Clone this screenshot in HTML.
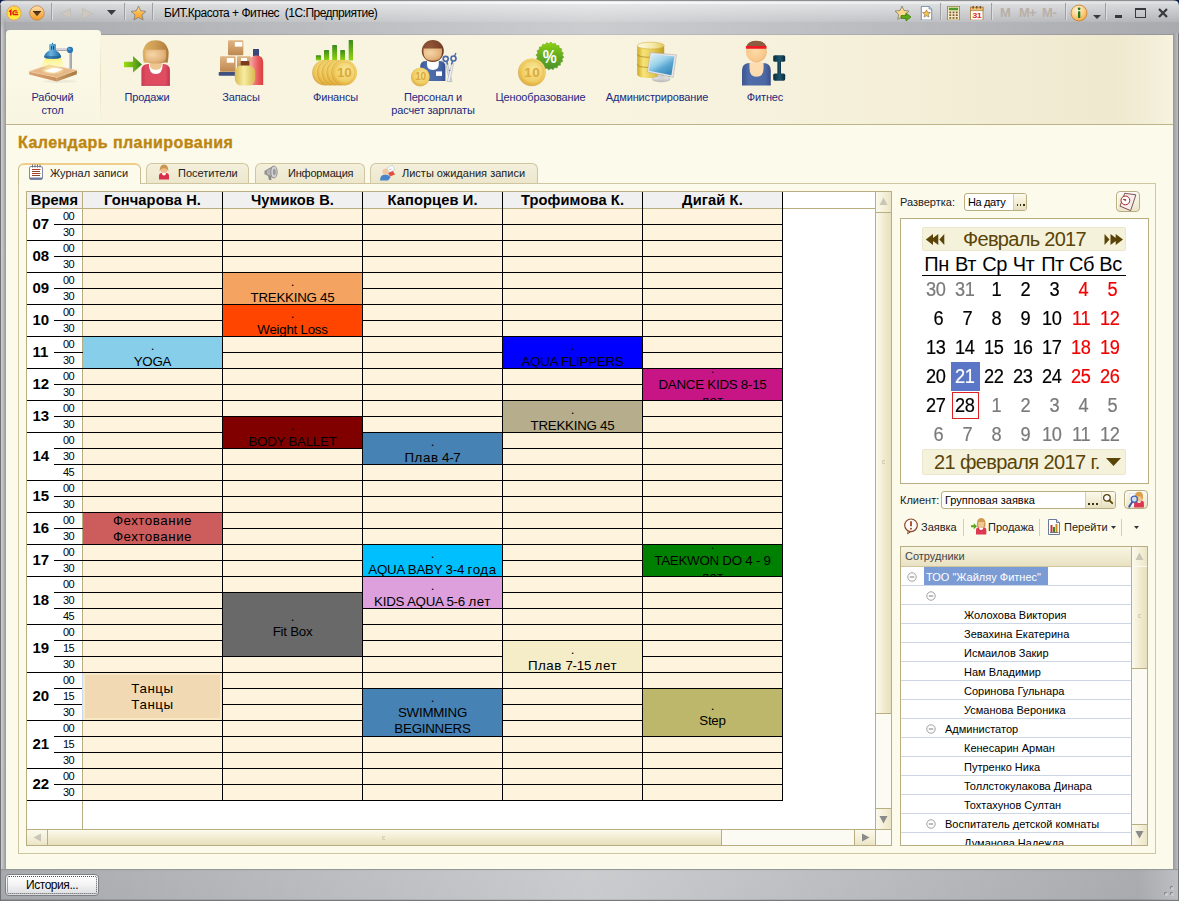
<!DOCTYPE html>
<html><head><meta charset="utf-8"><title>1C</title>
<style>
*{box-sizing:border-box;margin:0;padding:0}
html,body{width:1179px;height:901px;overflow:hidden;background:#a9abaf;font-family:"Liberation Sans",sans-serif;font-size:11px;color:#000}
div,span,svg{position:absolute}
#frame{left:0;top:0;width:1179px;height:901px;background:#a8aaae;overflow:hidden}
#titlebar{left:0;top:0;width:1179px;height:35px;background:linear-gradient(#606266 0,#a8a9ac 0.800px,#dfe0e1 1.600px,#dedfe0 3.300px,#d6d7d9 4.500px,#c8c9cc 12px,#b3b5b8 21.500px,#a9abaf 22.500px,#a8aaae 33.500px,#94969a 34.500px,#94969a 35px)}
.hl2{left:0;width:1179px;background:linear-gradient(90deg,rgba(255,255,255,0) 0,rgba(255,255,255,0.400) 50%,rgba(255,255,255,0) 100%)}
#content{left:6px;top:35px;width:1167px;height:834px;background:#fcfaeb}
#secpanel{left:6px;top:35px;width:1167px;height:90px;background:linear-gradient(90deg,#f8f4e0 0,#f8f4e0 50%,#f5f0da 72%,#efe9cf 95%,#f3eed8 98.5%,#f7f3df 100%);border-bottom:1px solid #beb389}
.sec{top:91px;text-align:center;color:#1c2a80;font-size:11px;line-height:13px;white-space:nowrap;transform:translateX(-50%);letter-spacing:-0.15px}
.t{white-space:nowrap}
.tsep{top:3px;width:2px;height:17px;border-left:1px solid #9d9fa3;border-right:1px solid #dcdddf}
</style></head><body>
<div id="frame">
<div id="titlebar"></div>
<div class="hl2" style="top:1px;height:34px"></div>
<div style="left:0;top:1.500px;width:1179px;height:2.500px;background:linear-gradient(90deg,rgba(255,255,255,0) 0,rgba(255,255,255,0.750) 50%,rgba(255,255,255,0) 100%)"></div>
<div id="content"></div>
<!-- window borders -->
<div style="left:0;top:5px;width:1px;height:896px;background:#6e7073"></div>
<div style="left:1px;top:16px;width:5px;height:885px;background:linear-gradient(90deg,#cfd0d2 0,#c2c3c6 1.500px,#aeb0b3 3px,#96989c 5px);-webkit-mask-image:linear-gradient(transparent 0,#000 14px);mask-image:linear-gradient(transparent 0,#000 14px)"></div>
<div style="left:1173px;top:33px;width:6px;height:868px;background:linear-gradient(90deg,#97999d 0,#a3a5a9 1.500px,#aeb0b3 3px,#bcbec0 5px,#77797d 5px,#77797d 6px)"></div>
<div style="left:0;top:869px;width:1179px;height:32px;background:linear-gradient(#8d8f93 0,#a4a6aa 1.500px,#a8aaae 4px,#a6a8ac 30px,#77797d 31px)"></div>
<div class="hl2" style="top:870px;height:30px"></div>
<div style="left:1138px;top:870px;width:40px;height:30px;background:linear-gradient(90deg,rgba(205,207,210,0),rgba(205,207,210,0.550))"></div>
<div style="left:0;top:869px;width:1px;height:32px;background:#6e7073"></div>
<div style="left:1178px;top:869px;width:1px;height:32px;background:#77797d"></div>
<!-- corners -->
<svg style="left:0;top:0" width="6" height="6" viewBox="0 0 6 6"><path d="M0 0H6Q0 0 0 6Z" fill="#0a1e4a"/></svg>
<svg style="left:1173px;top:0" width="6" height="6" viewBox="0 0 6 6"><path d="M6 0H0Q6 0 6 6Z" fill="#0a1e4a"/></svg>
<!-- resize grip -->
<div style="left:1171px;top:887px;width:3px;height:3px;border-radius:1px;background:#c9cacc;box-shadow:-1px -1px 0 #85878b"></div>
<div style="left:1165px;top:893px;width:3px;height:3px;border-radius:1px;background:#c9cacc;box-shadow:-1px -1px 0 #85878b"></div>
<div style="left:1171px;top:893px;width:3px;height:3px;border-radius:1px;background:#c9cacc;box-shadow:-1px -1px 0 #85878b"></div>
<!-- title bar icons -->
<svg style="left:6px;top:5px" width="16" height="16" viewBox="0 0 16 16"><defs><linearGradient id="g1c" x1="0" y1="0" x2="0" y2="1"><stop offset="0" stop-color="#ffd24a"/><stop offset="0.500" stop-color="#ffe61e"/><stop offset="1" stop-color="#fff04a"/></linearGradient></defs><circle cx="8" cy="8" r="7.200" fill="url(#g1c)" stroke="#e3a070" stroke-width="1"/><path d="M3.200 6.800L4.800 5.400V10.600" stroke="#e8121c" stroke-width="1.500" fill="none"/><path d="M11 6.200Q8.500 4.800 7.200 6.800Q6.400 8.600 7.800 9.600H12.200" stroke="#e8121c" stroke-width="1.400" fill="none"/><path d="M8.800 7.800H12" stroke="#e8121c" stroke-width="1" fill="none"/></svg>
<svg style="left:29px;top:5px" width="16" height="17" viewBox="0 0 16 17"><defs><linearGradient id="gdd" x1="0" y1="0" x2="0" y2="1"><stop offset="0" stop-color="#fde2b8"/><stop offset="0.450" stop-color="#f9bf6a"/><stop offset="1" stop-color="#f49a22"/></linearGradient></defs><circle cx="8" cy="8" r="7.200" fill="url(#gdd)" stroke="#c8894a" stroke-width="0.900"/><path d="M3.800 6.200H12.200L8 11.200Z" fill="#5a3a1a"/><path d="M3.800 6.200H12.200L11.500 7H4.500Z" fill="#2a1a0a"/></svg>
<div class="tsep" style="left:51px"></div>
<svg style="left:60px;top:8px" width="11" height="11" viewBox="0 0 11 11"><path d="M10.500 0.500V10.500L0.500 5.500Z" fill="#cdc8c0" stroke="#bdb8b0" stroke-width="0.600"/></svg>
<svg style="left:82px;top:8px" width="11" height="11" viewBox="0 0 11 11"><path d="M0.500 0.500V10.500L10.500 5.500Z" fill="#cdc8c0" stroke="#bdb8b0" stroke-width="0.600"/></svg>
<svg style="left:107px;top:10px" width="9" height="5" viewBox="0 0 9 5"><path d="M0 0H9L4.500 5Z" fill="#3a3a3c"/></svg>
<div class="tsep" style="left:124px"></div>
<svg style="left:130px;top:5px" width="17" height="16" viewBox="0 0 17 16"><defs><linearGradient id="gst" x1="0" y1="0" x2="0" y2="1"><stop offset="0" stop-color="#ffe09a"/><stop offset="0.500" stop-color="#fbb84a"/><stop offset="1" stop-color="#f59a20"/></linearGradient></defs><path d="M8.500 1L10.700 5.800L15.900 6.400L12 9.900L13.100 15L8.500 12.400L3.900 15L5 9.900L1.100 6.400L6.300 5.800Z" fill="url(#gst)" stroke="#8a8478" stroke-width="0.900" stroke-linejoin="round"/></svg>
<div class="tsep" style="left:152px"></div>
<div class="t" style="left:164px;top:6px;font-size:12px;line-height:14px;color:#000;letter-spacing:-0.5px">БИТ.Красота + Фитнес&nbsp; (1С:Предприятие)</div>

<svg style="left:894px;top:5px" width="18" height="17" viewBox="0 0 18 17"><path d="M8 1L10 5.500L15 6.100L11.300 9.400L12.300 14.300L8 11.800L3.700 14.300L4.700 9.400L1 6.100L6 5.500Z" fill="#fbd98a" stroke="#8a8478" stroke-width="0.900" stroke-linejoin="round"/><path d="M7 10.500H12V8L17 12L12 16V13.500H7Z" fill="#5aa81a" stroke="#3a7a0a" stroke-width="0.700"/></svg>
<svg style="left:919.500px;top:5.500px" width="13" height="14.500" viewBox="0 0 15 17" preserveAspectRatio="none"><path d="M1.500 0.500H10.500L13.500 3.500V16.500H1.500Z" fill="#fff" stroke="#6a7f9f"/><path d="M10.500 0.500V3.500H13.500" fill="#dfe7f2" stroke="#6a7f9f"/><path d="M7.500 4.500L8.800 7.400L12 7.700L9.600 9.800L10.300 13L7.500 11.400L4.700 13L5.400 9.800L3 7.700L6.200 7.400Z" fill="#fbc04a" stroke="#8a7a58" stroke-width="0.800" stroke-linejoin="round"/></svg>
<div class="tsep" style="left:940px"></div>
<svg style="left:947px;top:5.500px" width="13" height="14.500" viewBox="0 0 14 17" preserveAspectRatio="none"><rect x="0.500" y="0.500" width="13" height="16" fill="#f6ecc8" stroke="#a08a50"/><rect x="2" y="2" width="10" height="3" fill="#4f9a2a"/><g fill="#7a5a30"><rect x="2.500" y="6.500" width="2" height="2"/><rect x="6" y="6.500" width="2" height="2"/><rect x="9.500" y="6.500" width="2" height="2"/><rect x="2.500" y="9.700" width="2" height="2"/><rect x="6" y="9.700" width="2" height="2"/><rect x="9.500" y="9.700" width="2" height="2"/><rect x="2.500" y="13" width="2" height="2"/><rect x="6" y="13" width="2" height="2"/><rect x="9.500" y="13" width="2" height="2"/></g></svg>
<svg style="left:970px;top:5.500px" width="13.500" height="14.500" viewBox="0 0 14 17" preserveAspectRatio="none"><rect x="0.500" y="1.500" width="13" height="15" fill="#fff" stroke="#b08a50"/><rect x="0.500" y="1.500" width="13" height="4" fill="#f0c070" stroke="#b08a50"/><g fill="#7a5020"><rect x="2.500" y="0" width="1.500" height="3"/><rect x="6.200" y="0" width="1.500" height="3"/><rect x="10" y="0" width="1.500" height="3"/></g><text x="7" y="14.500" font-family="Liberation Sans" font-size="9.500" font-weight="bold" fill="#e03020" text-anchor="middle" letter-spacing="-0.500">31</text></svg>
<div class="tsep" style="left:991px"></div>
<div class="t" style="left:1000px;top:5px;font-size:13px;line-height:15px;font-weight:bold;color:#b9afa6;letter-spacing:-0.300px">M</div>
<div class="t" style="left:1019px;top:5px;font-size:13px;line-height:15px;font-weight:bold;color:#b9afa6;letter-spacing:-0.800px">M+</div>
<div class="t" style="left:1042px;top:5px;font-size:13px;line-height:15px;font-weight:bold;color:#b9afa6;letter-spacing:-0.300px">M-</div>
<div class="tsep" style="left:1065px"></div>
<svg style="left:1070px;top:4px" width="18" height="18" viewBox="0 0 18 18"><defs><radialGradient id="ginf" cx="0.400" cy="0.300" r="0.800"><stop offset="0" stop-color="#fff6e0"/><stop offset="0.500" stop-color="#fbd08a"/><stop offset="1" stop-color="#f0a030"/></radialGradient></defs><circle cx="9" cy="9" r="8" fill="url(#ginf)" stroke="#c8893a" stroke-width="0.900"/><rect x="8" y="7.300" width="2.300" height="6.700" fill="#2a7a1a"/><circle cx="9.100" cy="4.800" r="1.400" fill="#2a7a1a"/></svg>
<svg style="left:1093px;top:14.500px" width="8" height="4" viewBox="0 0 8 4"><path d="M0 0H8L4 4Z" fill="#3a3a3c"/></svg>
<div class="tsep" style="left:1105px"></div>
<div style="left:1115px;top:15px;width:7px;height:2.500px;background:#38393b"></div>
<div style="left:1135px;top:8px;width:11px;height:10px;border:1px solid #38393b;border-top:2px solid #38393b"></div>
<svg style="left:1158px;top:8px" width="10" height="10" viewBox="0 0 10 10"><path d="M1 1L9 9M9 1L1 9" stroke="#38393b" stroke-width="2.200"/></svg>
<div id="secpanel"></div>
<div style="left:6px;top:30px;width:95px;height:94px;border-radius:4px 4px 0 0;background:linear-gradient(#fbf9e8,#faf7e5 60%,#f8f5e1)"></div>
<div style="left:100px;top:36px;width:1px;height:88px;background:linear-gradient(rgba(210,200,160,0),rgba(210,200,160,0.500) 50%,rgba(210,200,160,0))"></div>
<div class="sec" style="left:52.5px">Рабочий<br>стол</div>
<div class="sec" style="left:147px">Продажи</div>
<div class="sec" style="left:241px">Запасы</div>
<div class="sec" style="left:335.5px">Финансы</div>
<div class="sec" style="left:433px">Персонал и<br>расчет зарплаты</div>
<div class="sec" style="left:540.5px">Ценообразование</div>
<div class="sec" style="left:657px">Администрирование</div>
<div class="sec" style="left:765px">Фитнес</div>
<div class="t" style="left:18px;top:132.500px;font-size:16px;line-height:20px;font-weight:bold;color:#bc8610;letter-spacing:0.44px;-webkit-text-stroke:0.35px #bc8610">Календарь планирования</div>
<svg style="left:0;top:35px" width="1179" height="90" viewBox="0 35 1179 90">
<defs>
<linearGradient id="wood" x1="0" y1="0" x2="1" y2="0"><stop offset="0" stop-color="#e9bf90"/><stop offset="1" stop-color="#d69c66"/></linearGradient>
<linearGradient id="shade" x1="0" y1="0" x2="1" y2="0"><stop offset="0" stop-color="#1f6fae"/><stop offset="0.400" stop-color="#6ab4e0"/><stop offset="1" stop-color="#1a5f9a"/></linearGradient>
<linearGradient id="cone" x1="0" y1="0" x2="0" y2="1"><stop offset="0" stop-color="#fff36a" stop-opacity="0.950"/><stop offset="1" stop-color="#fff9b0" stop-opacity="0.350"/></linearGradient>
<linearGradient id="pole" x1="0" y1="0" x2="1" y2="0"><stop offset="0" stop-color="#d8d8de"/><stop offset="1" stop-color="#8a8a94"/></linearGradient>
<linearGradient id="garr" x1="0" y1="0" x2="0" y2="1"><stop offset="0" stop-color="#9ad02a"/><stop offset="1" stop-color="#3f8f0e"/></linearGradient>
<linearGradient id="hairw" x1="0" y1="0" x2="0" y2="1"><stop offset="0" stop-color="#d4a662"/><stop offset="1" stop-color="#b07c3a"/></linearGradient>
<radialGradient id="skin" cx="0.500" cy="0.400" r="0.700"><stop offset="0" stop-color="#f6d2a8"/><stop offset="1" stop-color="#dca06a"/></radialGradient>
<linearGradient id="redb" x1="0" y1="0" x2="0" y2="1"><stop offset="0" stop-color="#e2506a"/><stop offset="1" stop-color="#c42a48"/></linearGradient>
<linearGradient id="box" x1="0" y1="0" x2="0" y2="1"><stop offset="0" stop-color="#e0b484"/><stop offset="1" stop-color="#bd8850"/></linearGradient>
<linearGradient id="jar" x1="0" y1="0" x2="1" y2="0"><stop offset="0" stop-color="#dcbc54"/><stop offset="0.450" stop-color="#f6eca2"/><stop offset="1" stop-color="#dab850"/></linearGradient>
<linearGradient id="bottle" x1="0" y1="0" x2="1" y2="0"><stop offset="0" stop-color="#f7a8a8"/><stop offset="0.600" stop-color="#ea5a5a"/><stop offset="1" stop-color="#d84040"/></linearGradient>
<linearGradient id="gbar" x1="0" y1="0" x2="0" y2="1"><stop offset="0" stop-color="#4a9a10"/><stop offset="1" stop-color="#a4dc3c"/></linearGradient>
<radialGradient id="coin" cx="0.400" cy="0.350" r="0.750"><stop offset="0" stop-color="#fbe596"/><stop offset="0.600" stop-color="#ecc050"/><stop offset="1" stop-color="#c99422"/></radialGradient>
<linearGradient id="blueb" x1="0" y1="0" x2="0" y2="1"><stop offset="0" stop-color="#4a6cb0"/><stop offset="1" stop-color="#2f4a8a"/></linearGradient>
<radialGradient id="badge" cx="0.400" cy="0.350" r="0.750"><stop offset="0" stop-color="#72b83a"/><stop offset="1" stop-color="#3a7c14"/></radialGradient>
<linearGradient id="db" x1="0" y1="0" x2="1" y2="0"><stop offset="0" stop-color="#caa22a"/><stop offset="0.350" stop-color="#f6e27a"/><stop offset="1" stop-color="#c09820"/></linearGradient>
<linearGradient id="scr" x1="0" y1="0" x2="1" y2="1"><stop offset="0" stop-color="#c4e6f8"/><stop offset="0.500" stop-color="#7cc0e6"/><stop offset="1" stop-color="#3c8cc4"/></linearGradient>
<linearGradient id="tank" x1="0" y1="0" x2="1" y2="0"><stop offset="0" stop-color="#5474b4"/><stop offset="1" stop-color="#34508e"/></linearGradient>
</defs>
<g>
<defs><radialGradient id="glow" cx="0.500" cy="0.500" r="0.500"><stop offset="0" stop-color="#fff6c8" stop-opacity="0.950"/><stop offset="0.600" stop-color="#fcebb0" stop-opacity="0.700"/><stop offset="1" stop-color="#f4d8a0" stop-opacity="0"/></radialGradient>
<linearGradient id="woodl" x1="0" y1="0" x2="1" y2="0"><stop offset="0" stop-color="#dba274"/><stop offset="1" stop-color="#c98d5a"/></linearGradient>
<linearGradient id="woodr" x1="0" y1="0" x2="1" y2="0"><stop offset="0" stop-color="#c99a62"/><stop offset="1" stop-color="#a87a44"/></linearGradient></defs>
<ellipse cx="60" cy="81.300" rx="17" ry="1.600" fill="#000" opacity="0.050"/>
<path d="M29.200 71.400L56.800 77.400V81.600L29.200 74.600Z" fill="url(#woodl)"/>
<path d="M56.800 77.400L76.900 70.200V74.200L56.800 81.600Z" fill="url(#woodr)"/>
<path d="M29.200 71.400L49 64.800L76.900 70.200L56.800 77.400Z" fill="#e6b888"/>
<path d="M29.200 71.400L49 64.800L76.900 70.200L56.800 77.400Z" fill="none" stroke="#f0cfa4" stroke-width="0.500"/>
<ellipse cx="52.500" cy="70.300" rx="12.500" ry="4.300" fill="url(#glow)"/>
<path d="M40.900 66.200L45.700 57.900H61L64 66.200Q52.500 70 40.900 66.200Z" fill="url(#cone)"/>
<path d="M44.200 71.100L53.200 67.800L63.400 69L53.800 72.900Z" fill="#fff"/>
<rect x="69" y="52" width="2.800" height="16.900" fill="url(#pole)"/>
<rect x="55.500" y="48" width="12" height="2.700" fill="#d4d4da"/><rect x="55.500" y="50" width="12" height="0.800" fill="#9a9aa2"/>
<circle cx="70" cy="49.900" r="3.100" fill="#2a78b4"/><circle cx="69.200" cy="49" r="1.300" fill="#5aa6d8" opacity="0.800"/>
<path d="M49.300 44.600Q49.300 43.800 52.500 43.800Q55.900 43.800 55.900 44.600V50.400Q60.500 53 61.200 56.600Q61.200 58.900 52.600 58.900Q44 58.900 44 56.600Q44.800 53 49.300 50.400Z" fill="url(#shade)"/>
<ellipse cx="52.600" cy="57.400" rx="8.400" ry="1.500" fill="#134f80" opacity="0.550"/>
<rect x="51.200" y="46" width="0.900" height="3.600" fill="#0f4674"/><rect x="53" y="46" width="0.900" height="3.600" fill="#0f4674"/>
<rect x="52" y="42.800" width="0.900" height="1.400" fill="#1d5f96"/>
</g>
<g>
<defs><linearGradient id="hairh" x1="0" y1="0" x2="1" y2="0"><stop offset="0" stop-color="#dcb262"/><stop offset="0.500" stop-color="#cc9c52"/><stop offset="1" stop-color="#ae7a3a"/></linearGradient>
<linearGradient id="redh" x1="0" y1="0" x2="1" y2="0"><stop offset="0" stop-color="#c83a52"/><stop offset="0.150" stop-color="#de4a60"/><stop offset="0.850" stop-color="#e04c62"/><stop offset="1" stop-color="#c03248"/></linearGradient>
<linearGradient id="garrh" x1="0" y1="0" x2="1" y2="0"><stop offset="0" stop-color="#9cdc10"/><stop offset="0.500" stop-color="#6cb418"/><stop offset="1" stop-color="#3c8618"/></linearGradient>
<radialGradient id="skin2" cx="0.350" cy="0.350" r="0.800"><stop offset="0" stop-color="#f6d6a6"/><stop offset="0.600" stop-color="#e6b882"/><stop offset="1" stop-color="#cf9c62"/></radialGradient></defs>
<path d="M141.400 85.800V70.500Q141.400 63.900 148 63.900H163.300Q169.900 63.900 169.900 70.500V85.800Z" fill="url(#redh)"/>
<path d="M141.400 84.800H169.900V85.800H141.400Z" fill="#a82840" opacity="0.500"/>
<path d="M148.900 63.900H162.700Q162.700 73.900 155.800 73.900Q148.900 73.900 148.900 63.900Z" fill="#fff"/>
<path d="M149.800 62H161.800V64.500Q161.800 69.800 155.800 69.800Q149.800 69.800 149.800 64.500Z" fill="#eec690"/>
<path d="M143.700 62.700Q142 52 143.400 49Q146 40.200 155.700 40.200Q165.400 40.200 168 49Q169.400 52 167.700 62.700Q164 62.200 161 63.300H150.400Q147.500 62.200 143.700 62.700Z" fill="url(#hairh)"/>
<path d="M145.400 49.800H166V57Q166 63.300 155.700 63.300Q145.400 63.300 145.400 57Z" fill="url(#skin2)"/>
<path d="M124 61.800H133V56.100L142 64.400L133 72.600V67.200H124Z" fill="url(#garrh)"/>
</g>
<g>
<rect x="228" y="40.200" width="15.300" height="15" rx="1" fill="url(#box)"/><rect x="234.800" y="42" width="7.500" height="4.600" fill="#fff"/>
<rect x="220" y="56.300" width="15.600" height="15.500" rx="1" fill="url(#box)"/><rect x="226.800" y="58" width="7.200" height="4.700" fill="#fff"/>
<rect x="237" y="56.300" width="14" height="15.500" rx="1" fill="url(#box)"/><rect x="241" y="58" width="6" height="4.700" fill="#fff"/>
<rect x="218.700" y="72" width="20" height="3.800" rx="0.800" fill="#3f4f80"/>
<rect x="253" y="49" width="6" height="7" fill="#39487a"/>
<path d="M250 85V62Q250 55.400 256.500 55.400Q263.200 55.400 263.200 62V85Z" fill="url(#bottle)"/>
<rect x="240.700" y="61" width="8.600" height="5" rx="0.800" fill="#7a3c1c"/>
<rect x="234.800" y="65.600" width="20.400" height="20" rx="6.500" fill="url(#jar)"/>
</g>
<g><defs><linearGradient id="gbar2" x1="0" y1="0" x2="0" y2="1"><stop offset="0" stop-color="#3a8a1c"/><stop offset="1" stop-color="#90d40e"/></linearGradient><radialGradient id="coin2" cx="0.550" cy="0.400" r="0.650"><stop offset="0" stop-color="#f8e89a"/><stop offset="0.700" stop-color="#f0cc62"/><stop offset="0.880" stop-color="#e6b444"/><stop offset="1" stop-color="#cf9a30"/></radialGradient></defs><rect x="315.9" y="55.2" width="5.1" height="5.3" rx="0.600" fill="url(#gbar2)"/><rect x="324.0" y="50.1" width="5.1" height="10.4" rx="0.600" fill="url(#gbar2)"/><rect x="332.2" y="45.0" width="4.8" height="15.5" rx="0.600" fill="url(#gbar2)"/><rect x="340.2" y="50.1" width="4.8" height="10.4" rx="0.600" fill="url(#gbar2)"/><rect x="348.7" y="39.9" width="4.3" height="20.6" rx="0.600" fill="url(#gbar2)"/><circle cx="324.8" cy="72.800" r="12.700" fill="#c08a28" opacity="0.550"/><circle cx="325.3" cy="72.600" r="12.600" fill="url(#coin2)"/><circle cx="329.6" cy="72.800" r="12.700" fill="#c08a28" opacity="0.550"/><circle cx="330.1" cy="72.600" r="12.600" fill="url(#coin2)"/><circle cx="334.4" cy="72.800" r="12.700" fill="#c08a28" opacity="0.550"/><circle cx="334.9" cy="72.600" r="12.600" fill="url(#coin2)"/><circle cx="339.1" cy="72.800" r="12.700" fill="#c08a28" opacity="0.550"/><circle cx="339.6" cy="72.600" r="12.600" fill="url(#coin2)"/><circle cx="343.9" cy="72.800" r="12.700" fill="#c08a28" opacity="0.550"/><circle cx="344.4" cy="72.600" r="12.600" fill="url(#coin2)"/><circle cx="344.400" cy="72.600" r="10.600" fill="none" stroke="#e2b040" stroke-width="0.700" opacity="0.600"/>
<text x="344.300" y="77.400" font-family="Liberation Sans" font-weight="bold" font-size="13.600" fill="#dcaa3a" text-anchor="middle" letter-spacing="-0.300">10</text>
</g>
<g>
<defs><linearGradient id="blueh" x1="0" y1="0" x2="1" y2="0"><stop offset="0" stop-color="#3c5898"/><stop offset="0.300" stop-color="#4e6eae"/><stop offset="0.800" stop-color="#4866a6"/><stop offset="1" stop-color="#34508c"/></linearGradient>
<radialGradient id="hairm" cx="0.350" cy="0.300" r="0.800"><stop offset="0" stop-color="#93583a"/><stop offset="1" stop-color="#6c331a"/></radialGradient></defs>
<path d="M420.200 81V66.500Q420.200 60.900 426 60.900H439.600Q445.400 60.900 445.400 66.500V81Z" fill="url(#blueh)"/>
<path d="M427 60.900H438.800V64Q438.800 69.900 432.900 69.900Q427 69.900 427 64Z" fill="#fff"/>
<rect x="436" y="71.400" width="6" height="4.500" fill="#fff"/>
<circle cx="432.800" cy="51" r="11" fill="url(#hairm)"/>
<path d="M423.500 48.600H442V52.500Q442 60.700 432.800 60.700Q423.500 60.700 423.500 52.500Z" fill="url(#skin2)"/>
<path d="M447.300 62.500L452 81.600L449.400 81.600L445.800 63.500Z" fill="#e0e1e6" stroke="#9ca0aa" stroke-width="0.500"/>
<path d="M452 62.500L447.200 81.600L449.800 81.600L453.600 63.500Z" fill="#f2f2f5" stroke="#9ca0aa" stroke-width="0.500"/><circle cx="449.600" cy="70.400" r="0.700" fill="#5a6a9a"/>
<circle cx="445.700" cy="58.800" r="2.500" fill="none" stroke="#4a6aac" stroke-width="1.700"/>
<circle cx="453.500" cy="58.500" r="2.500" fill="none" stroke="#4a6aac" stroke-width="1.700"/>
<path d="M454.500 56.200L455.700 53.400" stroke="#4a6aac" stroke-width="1.300" stroke-linecap="round"/>
<path d="M446.500 61.300L447.800 64.500M452.700 61L451.400 64.500" stroke="#4a6aac" stroke-width="1.500"/>
<circle cx="420.200" cy="77.100" r="9.300" fill="#c08a28" opacity="0.500"/>
<circle cx="420.500" cy="76.800" r="9.200" fill="url(#coin2)"/>
<text x="420.500" y="80.300" font-family="Liberation Sans" font-weight="bold" font-size="10" fill="#dcaa3a" text-anchor="middle" letter-spacing="-0.300">10</text>
</g>
<g><defs><linearGradient id="badge2" x1="0" y1="0" x2="0" y2="1"><stop offset="0" stop-color="#8ed20e"/><stop offset="0.450" stop-color="#68ae1e"/><stop offset="1" stop-color="#48922a"/></linearGradient></defs><polygon points="563.9,57.2 562.0,59.0 562.8,61.5 560.5,62.6 560.5,65.2 557.9,65.5 557.2,68.0 554.6,67.6 553.1,69.7 550.9,68.5 548.8,70.1 547.0,68.2 544.5,69.0 543.4,66.7 540.8,66.7 540.5,64.1 538.0,63.4 538.4,60.8 536.3,59.3 537.5,57.1 535.9,55.0 537.8,53.2 537.0,50.7 539.3,49.6 539.3,47.0 541.9,46.7 542.6,44.2 545.2,44.6 546.7,42.5 548.9,43.7 551.0,42.1 552.8,44.0 555.3,43.2 556.4,45.5 559.0,45.5 559.3,48.1 561.8,48.8 561.4,51.4 563.5,52.9 562.3,55.1" fill="url(#badge2)" stroke="#5a9a22" stroke-width="0.400" stroke-linejoin="round"/><text x="549.800" y="62.700" font-family="Liberation Sans" font-weight="bold" font-size="17.500" fill="#fff" text-anchor="middle" textLength="14" lengthAdjust="spacingAndGlyphs">%</text>
<circle cx="531.700" cy="72.500" r="13.800" fill="#c08a28" opacity="0.500"/>
<circle cx="532.100" cy="72.100" r="13.700" fill="url(#coin2)"/>
<circle cx="532.100" cy="72.100" r="11.400" fill="none" stroke="#e2b040" stroke-width="0.700" opacity="0.600"/>
<text x="532.200" y="77.100" font-family="Liberation Sans" font-weight="bold" font-size="13.600" fill="#dcaa3a" text-anchor="middle" letter-spacing="0.300">10</text>
</g>
<g>
<defs><linearGradient id="db2" x1="0" y1="0" x2="1" y2="0"><stop offset="0" stop-color="#cfa82a"/><stop offset="0.220" stop-color="#f6e478"/><stop offset="0.550" stop-color="#e6cc58"/><stop offset="1" stop-color="#c09c24"/></linearGradient>
<linearGradient id="dbt" x1="0" y1="0" x2="1" y2="0"><stop offset="0" stop-color="#fffbe8"/><stop offset="0.600" stop-color="#f4e8a4"/><stop offset="1" stop-color="#e0c860"/></linearGradient>
<linearGradient id="scr2" x1="0" y1="0" x2="0.700" y2="1"><stop offset="0" stop-color="#e0f4fa"/><stop offset="0.450" stop-color="#9cd2ea"/><stop offset="0.700" stop-color="#58a6d2"/><stop offset="1" stop-color="#3a8aba"/></linearGradient>
<linearGradient id="stand" x1="0" y1="0" x2="0" y2="1"><stop offset="0" stop-color="#f4f4f4"/><stop offset="1" stop-color="#b4b4b4"/></linearGradient></defs>
<path d="M637.200 45.600V74.500Q637.200 78 650.700 78Q664.200 78 664.200 74.500V45.600Z" fill="url(#db2)"/>
<path d="M637.200 54Q637.200 57.300 650.700 57.300Q664.200 57.300 664.200 54" fill="none" stroke="#a8841c" stroke-width="0.900" opacity="0.800"/>
<path d="M637.200 64.200Q637.200 67.500 650.700 67.500Q664.200 67.500 664.200 64.200" fill="none" stroke="#a8841c" stroke-width="0.900" opacity="0.800"/>
<ellipse cx="650.700" cy="45.600" rx="13.500" ry="3.400" fill="url(#dbt)" stroke="#d4b440" stroke-width="0.600"/>
<ellipse cx="661.200" cy="79.200" rx="9" ry="2.700" fill="url(#stand)" stroke="#a8a8a8" stroke-width="0.400"/>
<path d="M657.500 74.500L665 76L664.500 79H658.500Z" fill="#d4d4d4"/>
<path d="M650.400 52.500L676.500 54.900L673.200 77.400L647.400 72Z" fill="#e6e6e8" stroke="#a4a4a8" stroke-width="0.500" stroke-linejoin="round"/>
<path d="M651.600 54L674.400 56.400L671.400 75.300L648.900 70.800Z" fill="url(#scr2)"/>
<circle cx="669.300" cy="76.500" r="0.600" fill="#3cc030"/>
</g>
<g>
<defs><linearGradient id="tank2" x1="0" y1="0" x2="1" y2="0"><stop offset="0" stop-color="#3e5690"/><stop offset="0.250" stop-color="#506caa"/><stop offset="0.800" stop-color="#4c68a4"/><stop offset="1" stop-color="#3a508a"/></linearGradient>
<radialGradient id="skin3" cx="0.450" cy="0.450" r="0.650"><stop offset="0" stop-color="#fedaa8"/><stop offset="0.700" stop-color="#f8c88c"/><stop offset="1" stop-color="#e8aa6c"/></radialGradient>
<linearGradient id="dumb" x1="0" y1="0" x2="1" y2="0"><stop offset="0" stop-color="#0a2c3e"/><stop offset="0.550" stop-color="#1e566e"/><stop offset="1" stop-color="#0a2c3e"/></linearGradient></defs>
<path d="M742 85.500V70.500Q742 63 749.500 63H763.300Q770.800 63 770.800 70.500V85.500Z" fill="url(#tank2)"/>
<path d="M749.500 62.500H763.600V68Q763.600 76.800 756.500 76.800Q749.500 76.800 749.500 68Z" fill="#fcdcb0"/>
<ellipse cx="756.400" cy="51.800" rx="10.500" ry="10.700" fill="url(#skin3)"/>
<path d="M746.300 46.500Q748 40.800 756.400 40.800Q764.800 40.800 766.500 46.500Z" fill="#8c5c3e"/>
<rect x="745.900" y="45.900" width="20.600" height="2.800" rx="0.600" fill="#f01a22"/>
<rect x="777.400" y="61" width="3.600" height="13.500" fill="url(#dumb)"/>
<rect x="773.200" y="55.200" width="12" height="6.600" rx="1.600" fill="url(#dumb)"/>
<rect x="773.200" y="73.600" width="12" height="7.100" rx="1.600" fill="url(#dumb)"/>
</g>
</svg>
<style>
#tabpage{left:18px;top:183px;width:1138px;height:671px;border:1px solid #cfc59f;background:#fcfaeb}
.tab{top:163px;height:20px;border:1px solid #cfc59f;border-bottom:none;border-radius:6px 6px 0 0;background:linear-gradient(#f4f0dc,#ece6cc);font-size:11px;line-height:17px;white-space:nowrap;color:#222}
.tab.act{top:163px;height:21px;background:#fcfaeb;border-color:#c9bd93;border-top:2px solid #efcd8a;z-index:3}
.tab span{top:1px}
#grid{left:26px;top:191px;width:866px;height:655px;background:#fff;border:1px solid #b9ae82;overflow:hidden}
.hl{height:1px;background:#000}
.ev i{font-style:normal;letter-spacing:0.55px}
.vl{width:1px;background:#000}
.ev{text-align:center;font-size:13.33px;line-height:16px;color:#000;letter-spacing:-0.25px;overflow:hidden;white-space:nowrap}
.hh{font-weight:bold;font-size:14.67px;line-height:16px;white-space:nowrap;color:#000;letter-spacing:0.12px}
.hr{font-weight:bold;font-size:15px;line-height:16px;left:32.5px;color:#000}
.mn{font-size:11px;line-height:12px;left:63px;color:#000;letter-spacing:-0.5px}
</style>
<div id="tabpage"></div>
<div class="tab act" style="left:18px;width:123px"><span class="t" style="left:31px;top:0px;line-height:17px">Журнал записи</span></div>
<div class="tab" style="left:146px;width:103px"><span class="t" style="left:31px">Посетители</span></div>
<div class="tab" style="left:255px;width:110px"><span class="t" style="left:32px;letter-spacing:-0.2px">Информация</span></div>
<div class="tab" style="left:370px;width:168px"><span class="t" style="left:31px">Листы ожидания записи</span></div>
<svg style="left:29px;top:164.300px;z-index:5" width="14" height="16" viewBox="0 0 14 16"><rect x="0.500" y="2.500" width="13" height="13" rx="1.500" fill="#fff" stroke="#7f8aa8"/><path d="M0.800 13.500H13.200V14.500Q13.200 15.200 12.500 15.200H1.500Q0.800 15.200 0.800 14.500Z" fill="#6f7a9c"/><g stroke="#6a6a7a" stroke-width="1"><path d="M3.500 0.500V3.500M6 0.500V3.500M8.500 0.500V3.500M11 0.500V3.500"/></g><g stroke-width="1"><path d="M3 5.500H11" stroke="#b03a2a"/><path d="M3 7.500H11" stroke="#8a4a2a"/><path d="M3 9.500H11" stroke="#b03a2a"/><path d="M3 11.500H11" stroke="#8a4a2a"/></g><rect x="10" y="5" width="1.500" height="1" fill="#e03030"/><rect x="10" y="9" width="1.500" height="1" fill="#30a030"/></svg>
<svg style="left:158px;top:164px;z-index:5" width="12" height="16" viewBox="0 0 12 16"><path d="M1 15.500V12Q1 9 4 9H8Q11 9 11 12V15.500Z" fill="#d8304c"/><path d="M4 9H8Q8 11.500 6 11.500Q4 11.500 4 9Z" fill="#fff"/><circle cx="6" cy="5.300" r="3.600" fill="#eebf8e"/><path d="M1.800 8Q1.200 0.500 6 0.500Q10.800 0.500 10.200 8Q10 4.200 6 4.200Q2 4.200 1.800 8Z" fill="#c8964e"/></svg>
<svg style="left:264px;top:165px;z-index:5" width="17" height="16" viewBox="0 0 17 16"><path d="M2 5.500L9 1.500V12.500L2 9.500Z" fill="#b4b4b4" stroke="#7a7a7a" stroke-width="0.800"/><ellipse cx="10" cy="7" rx="3.200" ry="6" fill="#d6d6d6" stroke="#808080" stroke-width="0.800"/><ellipse cx="10.300" cy="7" rx="1.500" ry="3.300" fill="#9a9a9a"/><path d="M4 10.500L5 15H7.500L7 11.500" fill="#8a8a8a"/><rect x="0.500" y="5.500" width="2" height="4" fill="#8e8e8e"/></svg>
<svg style="left:379px;top:164px;z-index:5" width="17" height="17" viewBox="0 0 17 17"><path d="M1 16.500Q1 10.500 6 10.500Q10 10.500 11.500 13.500L9 16.500Z" fill="#4a84c8"/><circle cx="6.500" cy="7.500" r="3" fill="#f0c8a0"/><path d="M8 4L13.500 1L15.500 6L10 8.500Z" fill="#fff" stroke="#b8c0d0" stroke-width="0.600"/><path d="M9 9L14 7L16 10.500L11 12.500Z" fill="#e05040"/><path d="M10 6L12.500 5" stroke="#9aa8c0" stroke-width="0.700"/></svg>
<div id="grid"></div>
<div style="left:27px;top:192px;width:756px;height:16px;background:#f0f0f0"></div>
<div style="left:83px;top:209px;width:700px;height:592px;background:#fef3dc"></div>
<div style="left:27px;top:208px;width:848px;height:1px;background:#b9ae82"></div>
<div style="left:82px;top:192px;width:1px;height:637px;background:#b9ae82"></div>
<div class="t mn" style="top:210px">00</div>
<div class="hl" style="left:54px;top:224px;width:729px"></div>
<div class="t mn" style="top:226px">30</div>
<div class="hl" style="left:27px;top:240px;width:756px"></div>
<div class="t hr" style="top:216px">07</div>
<div class="t mn" style="top:242px">00</div>
<div class="hl" style="left:54px;top:256px;width:729px"></div>
<div class="t mn" style="top:258px">30</div>
<div class="hl" style="left:27px;top:272px;width:756px"></div>
<div class="t hr" style="top:248px">08</div>
<div class="t mn" style="top:274px">00</div>
<div class="hl" style="left:54px;top:288px;width:729px"></div>
<div class="t mn" style="top:290px">30</div>
<div class="hl" style="left:27px;top:304px;width:756px"></div>
<div class="t hr" style="top:280px">09</div>
<div class="t mn" style="top:306px">00</div>
<div class="hl" style="left:54px;top:320px;width:729px"></div>
<div class="t mn" style="top:322px">30</div>
<div class="hl" style="left:27px;top:336px;width:756px"></div>
<div class="t hr" style="top:312px">10</div>
<div class="t mn" style="top:338px">00</div>
<div class="hl" style="left:54px;top:352px;width:729px"></div>
<div class="t mn" style="top:354px">30</div>
<div class="hl" style="left:27px;top:368px;width:756px"></div>
<div class="t hr" style="top:344px">11</div>
<div class="t mn" style="top:370px">00</div>
<div class="hl" style="left:54px;top:384px;width:729px"></div>
<div class="t mn" style="top:386px">30</div>
<div class="hl" style="left:27px;top:400px;width:756px"></div>
<div class="t hr" style="top:376px">12</div>
<div class="t mn" style="top:402px">00</div>
<div class="hl" style="left:54px;top:416px;width:729px"></div>
<div class="t mn" style="top:418px">30</div>
<div class="hl" style="left:27px;top:432px;width:756px"></div>
<div class="t hr" style="top:408px">13</div>
<div class="t mn" style="top:434px">00</div>
<div class="hl" style="left:54px;top:448px;width:729px"></div>
<div class="t mn" style="top:450px">30</div>
<div class="hl" style="left:54px;top:464px;width:729px"></div>
<div class="t mn" style="top:466px">45</div>
<div class="hl" style="left:27px;top:480px;width:756px"></div>
<div class="t hr" style="top:448px">14</div>
<div class="t mn" style="top:482px">00</div>
<div class="hl" style="left:54px;top:496px;width:729px"></div>
<div class="t mn" style="top:498px">30</div>
<div class="hl" style="left:27px;top:512px;width:756px"></div>
<div class="t hr" style="top:488px">15</div>
<div class="t mn" style="top:514px">00</div>
<div class="hl" style="left:54px;top:528px;width:729px"></div>
<div class="t mn" style="top:530px">30</div>
<div class="hl" style="left:27px;top:544px;width:756px"></div>
<div class="t hr" style="top:520px">16</div>
<div class="t mn" style="top:546px">00</div>
<div class="hl" style="left:54px;top:560px;width:729px"></div>
<div class="t mn" style="top:562px">30</div>
<div class="hl" style="left:27px;top:576px;width:756px"></div>
<div class="t hr" style="top:552px">17</div>
<div class="t mn" style="top:578px">00</div>
<div class="hl" style="left:54px;top:592px;width:729px"></div>
<div class="t mn" style="top:594px">30</div>
<div class="hl" style="left:54px;top:608px;width:729px"></div>
<div class="t mn" style="top:610px">45</div>
<div class="hl" style="left:27px;top:624px;width:756px"></div>
<div class="t hr" style="top:592px">18</div>
<div class="t mn" style="top:626px">00</div>
<div class="hl" style="left:54px;top:640px;width:729px"></div>
<div class="t mn" style="top:642px">15</div>
<div class="hl" style="left:54px;top:656px;width:729px"></div>
<div class="t mn" style="top:658px">30</div>
<div class="hl" style="left:27px;top:672px;width:756px"></div>
<div class="t hr" style="top:640px">19</div>
<div class="t mn" style="top:674px">00</div>
<div class="hl" style="left:54px;top:688px;width:729px"></div>
<div class="t mn" style="top:690px">15</div>
<div class="hl" style="left:54px;top:704px;width:729px"></div>
<div class="t mn" style="top:706px">30</div>
<div class="hl" style="left:27px;top:720px;width:756px"></div>
<div class="t hr" style="top:688px">20</div>
<div class="t mn" style="top:722px">00</div>
<div class="hl" style="left:54px;top:736px;width:729px"></div>
<div class="t mn" style="top:738px">15</div>
<div class="hl" style="left:54px;top:752px;width:729px"></div>
<div class="t mn" style="top:754px">30</div>
<div class="hl" style="left:27px;top:768px;width:756px"></div>
<div class="t hr" style="top:736px">21</div>
<div class="t mn" style="top:770px">00</div>
<div class="hl" style="left:54px;top:784px;width:729px"></div>
<div class="t mn" style="top:786px">30</div>
<div class="hl" style="left:27px;top:800px;width:756px"></div>
<div class="t hr" style="top:776px">22</div>
<div class="vl" style="left:222px;top:192px;height:609px"></div>
<div class="vl" style="left:362px;top:192px;height:609px"></div>
<div class="vl" style="left:502px;top:192px;height:609px"></div>
<div class="vl" style="left:642px;top:192px;height:609px"></div>
<div class="vl" style="left:782px;top:192px;height:609px"></div>
<div class="t hh" style="left:27px;top:192px;width:55px;text-align:center">Время</div>
<div class="t hh" style="left:83px;top:192px;width:139px;text-align:center">Гончарова Н.</div>
<div class="t hh" style="left:223px;top:192px;width:139px;text-align:center">Чумиков В.</div>
<div class="t hh" style="left:363px;top:192px;width:139px;text-align:center">Капорцев И.</div>
<div class="t hh" style="left:503px;top:192px;width:139px;text-align:center">Трофимова К.</div>
<div class="t hh" style="left:643px;top:192px;width:139px;text-align:center">Дигай К.</div>
<div class="ev" style="left:223px;top:273px;width:139px;height:31px;background:#f4a460;"><div class="t" style="left:0;width:139px;top:0.6px;text-align:center">.</div><div class="t" style="left:0;width:139px;top:16.6px;text-align:center">TREKKING 45</div></div>
<div class="ev" style="left:223px;top:305px;width:139px;height:31px;background:#ff4500;"><div class="t" style="left:0;width:139px;top:0.6px;text-align:center">.</div><div class="t" style="left:0;width:139px;top:16.6px;text-align:center">Weight Loss</div></div>
<div class="ev" style="left:223px;top:417px;width:139px;height:31px;background:#800000;"><div class="t" style="left:0;width:139px;top:0.6px;text-align:center">.</div><div class="t" style="left:0;width:139px;top:16.6px;text-align:center">BODY BALLET</div></div>
<div class="ev" style="left:223px;top:593px;width:139px;height:63px;background:#696969;"><div class="t" style="left:0;width:139px;top:15.6px;text-align:center">.</div><div class="t" style="left:0;width:139px;top:31.1px;text-align:center">Fit Box</div></div>
<div class="ev" style="left:83px;top:337px;width:139px;height:31px;background:#87ceeb;"><div class="t" style="left:0;width:139px;top:0.6px;text-align:center">.</div><div class="t" style="left:0;width:139px;top:16.6px;text-align:center">YOGA</div></div>
<div class="ev" style="left:83px;top:513px;width:139px;height:31px;background:#cd5c5c;"><div class="t" style="left:0;width:139px;top:0.1px;text-align:center"><i>Фехтование</i></div><div class="t" style="left:0;width:139px;top:16.3px;text-align:center"><i>Фехтование</i></div></div>
<div class="ev" style="left:83px;top:673px;width:139px;height:47px;background:#f0d9b3;box-shadow:inset 0 0 0 2px #f8e8c6;"><div class="t" style="left:0;width:139px;top:7.6px;text-align:center"><i>Танцы</i></div><div class="t" style="left:0;width:139px;top:23.9px;text-align:center"><i>Танцы</i></div></div>
<div class="ev" style="left:363px;top:433px;width:139px;height:31px;background:#4682b4;"><div class="t" style="left:0;width:139px;top:0.6px;text-align:center">.</div><div class="t" style="left:0;width:139px;top:16.6px;text-align:center"><i>Плав</i> 4-7</div></div>
<div class="ev" style="left:363px;top:545px;width:139px;height:31px;background:#00bfff;"><div class="t" style="left:0;width:139px;top:0.6px;text-align:center">.</div><div class="t" style="left:0;width:139px;top:16.6px;text-align:center">AQUA BABY 3-4 <i>года</i></div></div>
<div class="ev" style="left:363px;top:577px;width:139px;height:31px;background:#dda0dd;"><div class="t" style="left:0;width:139px;top:0.6px;text-align:center">.</div><div class="t" style="left:0;width:139px;top:16.6px;text-align:center">KIDS AQUA 5-6 <i>лет</i></div></div>
<div class="ev" style="left:363px;top:689px;width:139px;height:47px;background:#4682b4;"><div class="t" style="left:0;width:139px;top:0.6px;text-align:center">.</div><div class="t" style="left:0;width:139px;top:15.6px;text-align:center">SWIMMING</div><div class="t" style="left:0;width:139px;top:31.6px;text-align:center">BEGINNERS</div></div>
<div class="ev" style="left:503px;top:337px;width:139px;height:31px;background:#0000ff;"><div class="t" style="left:0;width:139px;top:0.6px;text-align:center">.</div><div class="t" style="left:0;width:139px;top:16.6px;text-align:center">AQUA FLIPPERS</div></div>
<div class="ev" style="left:503px;top:401px;width:139px;height:31px;background:#b5ad8b;"><div class="t" style="left:0;width:139px;top:0.6px;text-align:center">.</div><div class="t" style="left:0;width:139px;top:16.6px;text-align:center">TREKKING 45</div></div>
<div class="ev" style="left:503px;top:641px;width:139px;height:31px;background:#f5ecc8;"><div class="t" style="left:0;width:139px;top:0.6px;text-align:center">.</div><div class="t" style="left:0;width:139px;top:16.6px;text-align:center"><i>Плав</i> 7-15 <i>лет</i></div></div>
<div class="ev" style="left:643px;top:369px;width:139px;height:31px;background:#c71585;"><div class="t" style="left:0;width:139px;top:-8.4px;text-align:center">.</div><div class="t" style="left:0;width:139px;top:7.6px;text-align:center">DANCE KIDS 8-15</div><div class="t" style="left:0;width:139px;top:23.6px;text-align:center"><i>лет</i></div></div>
<div class="ev" style="left:643px;top:545px;width:139px;height:31px;background:#008000;"><div class="t" style="left:0;width:139px;top:-8.4px;text-align:center">.</div><div class="t" style="left:0;width:139px;top:7.6px;text-align:center">TAEKWON DO 4 - 9</div><div class="t" style="left:0;width:139px;top:23.6px;text-align:center"><i>лет</i></div></div>
<div class="ev" style="left:643px;top:689px;width:139px;height:47px;background:#bdb76b;"><div class="t" style="left:0;width:139px;top:8.6px;text-align:center">.</div><div class="t" style="left:0;width:139px;top:23.6px;text-align:center">Step</div></div>
<div style="left:875px;top:192px;width:17px;height:638px;border-left:1px solid #b9ae82;border-right:1px solid #b9ae82;background:#fbfaf3"></div>
<div style="left:876px;top:192px;width:15px;height:20px;background:linear-gradient(90deg,#fbf9ec,#f3eed6 60%,#ebe4c6)"></div>
<div style="left:875px;top:212px;width:17px;height:1px;background:#b9ae82"></div>
<div style="left:876px;top:213px;width:15px;height:500px;background:linear-gradient(90deg,#fcfaee,#f2ecd2 50%,#e6dfbc)"></div>
<div style="left:875px;top:713px;width:17px;height:1px;background:#b9ae82"></div>
<div style="left:875px;top:808px;width:17px;height:1px;background:#b9ae82"></div>
<div style="left:876px;top:809px;width:15px;height:20px;background:linear-gradient(90deg,#fbf9ec,#f3eed6 60%,#ebe4c6)"></div>
<svg style="left:879px;top:197px" width="9" height="9" viewBox="0 0 9 9"><path d="M4.5 0.5 L8.5 8 L0.5 8 Z" fill="#c9c6b8"/></svg>
<svg style="left:879px;top:815px" width="9" height="9" viewBox="0 0 9 9"><path d="M0.5 1 L8.5 1 L4.5 8.5 Z" fill="#8a8a8a"/></svg>
<div style="left:27px;top:829px;width:864px;height:16px;border-top:1px solid #b9ae82;background:#fbfaf3"></div>
<div style="left:27px;top:830px;width:20px;height:15px;background:linear-gradient(#fbf9ec,#f3eed6 60%,#ebe4c6)"></div>
<div style="left:47px;top:830px;width:1px;height:15px;background:#b9ae82"></div>
<div style="left:48px;top:830px;width:673px;height:15px;background:linear-gradient(#fcfaee,#f2ecd2 50%,#e6dfbc)"></div>
<div style="left:721px;top:830px;width:1px;height:15px;background:#b9ae82"></div>
<div style="left:854px;top:830px;width:1px;height:15px;background:#b9ae82"></div>
<div style="left:855px;top:830px;width:20px;height:15px;background:linear-gradient(#fbf9ec,#f3eed6 60%,#ebe4c6)"></div>
<div style="left:875px;top:829px;width:1px;height:16px;background:#b9ae82"></div>
<svg style="left:33px;top:833px" width="9" height="9" viewBox="0 0 9 9"><path d="M8 0.5 L8 8.5 L0.5 4.5 Z" fill="#c9c6b8"/></svg>
<svg style="left:861px;top:833px" width="9" height="9" viewBox="0 0 9 9"><path d="M1 0.5 L1 8.5 L8.5 4.5 Z" fill="#8a8a8a"/></svg>
<div style="left:882px;top:460px;width:3px;height:4px;border:1px solid #d2cba8;border-right:none;border-radius:2px 0 0 2px"></div>
<div style="left:382px;top:836px;width:3px;height:4px;border:1px solid #d2cba8;border-right:none;border-radius:2px 0 0 2px"></div>
<div style="left:82px;top:673px;width:1px;height:47px;background:#c9d8ee"></div>
<style>
.lbl{font-size:11px;line-height:13px;color:#222;white-space:nowrap}
.inp{border:1px solid #b9ae82;border-radius:3px;background:#fff;overflow:hidden}
.btn{border:1px solid #b9ae82;border-radius:4px;background:linear-gradient(#fdfcf4,#f4f0dc 50%,#ebe5c9);box-shadow:inset 1px 1px 0 rgba(255,255,255,0.800)}
.cal{font-size:20px;line-height:29px;text-align:center;width:29px;height:29px;color:#000;white-space:nowrap;letter-spacing:-0.3px;padding-right:1px;-webkit-text-stroke:0.2px}
.cal b{font-weight:normal;display:inline-block;transform:scaleX(0.91);transform-origin:50% 50%}
.cal.g{color:#7a7a7a}
.cal.r{color:#f00000}
.dow{font-size:20px;line-height:24px;text-align:center;width:29px;height:24px;color:#000;white-space:nowrap;letter-spacing:-0.5px}
.tr{font-size:11px;line-height:13px;color:#000;white-space:nowrap}
.trl{left:901px;width:230px;height:1px;background:#cdd6e4}
</style>
<div class="lbl" style="left:900px;top:195.700px">Развертка:</div>
<div class="inp" style="left:964px;top:193px;width:63px;height:18px"><div class="lbl" style="left:3px;top:2px;color:#000;letter-spacing:-0.400px">На дату</div><div style="left:48px;top:0;width:14px;height:16px;border-left:1px solid #d8cfa8;background:linear-gradient(#fbf9ec,#f1ecd4 55%,#e6dfbf)"><div style="left:2.500px;top:10px;width:1.600px;height:2px;background:#3a2e0c"></div><div style="left:5.800px;top:10px;width:1.600px;height:2px;background:#3a2e0c"></div><div style="left:9.100px;top:10px;width:1.600px;height:2px;background:#3a2e0c"></div></div></div>
<div class="btn" style="left:1116px;top:191px;width:24px;height:21px"></div>
<svg style="left:1116px;top:191px" width="24" height="21" viewBox="1116 191 24 21"><path d="M1124.700 193.300L1135.900 194.800L1130.600 210.600L1120 206.100Z" fill="#f9efef" stroke="#5e2c2c" stroke-width="0.800" stroke-linejoin="round"/><circle cx="1125.400" cy="200.400" r="4.400" fill="#fff" stroke="#a82424" stroke-width="1"/><path d="M1125.800 200.800L1122.900 199.300L1125.900 199.500Z" fill="#8a1c1c" stroke="#8a1c1c" stroke-width="0.500"/></svg>
<div style="left:900px;top:218px;width:249px;height:266px;border:1px solid #b9ae82;background:#fff"></div>
<div style="left:922px;top:227px;width:204px;height:24px;background:#f5f2dc;border:1px solid #ebe7cc;border-radius:2px"></div>
<div class="t" style="left:922px;top:227px;width:204px;text-align:center;font-size:20px;line-height:24px;color:#5a4408;letter-spacing:-0.7px;padding-left:1px">Февраль 2017</div>
<svg style="left:925px;top:234px" width="20" height="11" viewBox="0 0 20 11"><path d="M8 0V11L0.800 5.500Z M13.300 0V11L6 5.500Z M19.300 0V11L14.300 5.500Z" fill="#5a4408"/></svg>
<svg style="left:1104px;top:234px" width="20" height="11" viewBox="0 0 20 11"><path d="M0.500 0V11L5.500 5.500Z M6.500 0V11L13.800 5.500Z M11.700 0V11L19 5.500Z" fill="#5a4408"/></svg>
<div class="dow" style="left:922px;top:252px">Пн</div>
<div class="dow" style="left:951px;top:252px">Вт</div>
<div class="dow" style="left:980px;top:252px">Ср</div>
<div class="dow" style="left:1009px;top:252px">Чт</div>
<div class="dow" style="left:1038px;top:252px">Пт</div>
<div class="dow" style="left:1067px;top:252px">Сб</div>
<div class="dow" style="left:1096px;top:252px">Вс</div>
<div style="left:922px;top:275px;width:204px;height:1px;background:#000"></div>
<div class="cal g" style="left:922px;top:275px;"><b>30</b></div>
<div class="cal g" style="left:951px;top:275px;"><b>31</b></div>
<div class="cal " style="left:980px;top:275px;padding-left:5px;"><b>1</b></div>
<div class="cal " style="left:1009px;top:275px;padding-left:5px;"><b>2</b></div>
<div class="cal " style="left:1038px;top:275px;padding-left:5px;"><b>3</b></div>
<div class="cal r" style="left:1067px;top:275px;padding-left:5px;"><b>4</b></div>
<div class="cal r" style="left:1096px;top:275px;padding-left:5px;"><b>5</b></div>
<div class="cal " style="left:922px;top:304px;padding-left:5px;"><b>6</b></div>
<div class="cal " style="left:951px;top:304px;padding-left:5px;"><b>7</b></div>
<div class="cal " style="left:980px;top:304px;padding-left:5px;"><b>8</b></div>
<div class="cal " style="left:1009px;top:304px;padding-left:5px;"><b>9</b></div>
<div class="cal " style="left:1038px;top:304px;"><b>10</b></div>
<div class="cal r" style="left:1067px;top:304px;"><b>11</b></div>
<div class="cal r" style="left:1096px;top:304px;"><b>12</b></div>
<div class="cal " style="left:922px;top:333px;"><b>13</b></div>
<div class="cal " style="left:951px;top:333px;"><b>14</b></div>
<div class="cal " style="left:980px;top:333px;"><b>15</b></div>
<div class="cal " style="left:1009px;top:333px;"><b>16</b></div>
<div class="cal " style="left:1038px;top:333px;"><b>17</b></div>
<div class="cal r" style="left:1067px;top:333px;"><b>18</b></div>
<div class="cal r" style="left:1096px;top:333px;"><b>19</b></div>
<div class="cal " style="left:922px;top:362px;"><b>20</b></div>
<div class="cal " style="left:951px;top:362px;background:#5b76c6;color:#fff;"><b>21</b></div>
<div class="cal " style="left:980px;top:362px;"><b>22</b></div>
<div class="cal " style="left:1009px;top:362px;"><b>23</b></div>
<div class="cal " style="left:1038px;top:362px;"><b>24</b></div>
<div class="cal r" style="left:1067px;top:362px;"><b>25</b></div>
<div class="cal r" style="left:1096px;top:362px;"><b>26</b></div>
<div class="cal " style="left:922px;top:391px;"><b>27</b></div>
<div style="left:952px;top:392px;width:27px;height:27px;border:1px solid #e02020"></div>
<div class="cal " style="left:951px;top:391px;"><b>28</b></div>
<div class="cal g" style="left:980px;top:391px;padding-left:5px;"><b>1</b></div>
<div class="cal g" style="left:1009px;top:391px;padding-left:5px;"><b>2</b></div>
<div class="cal g" style="left:1038px;top:391px;padding-left:5px;"><b>3</b></div>
<div class="cal g" style="left:1067px;top:391px;padding-left:5px;"><b>4</b></div>
<div class="cal g" style="left:1096px;top:391px;padding-left:5px;"><b>5</b></div>
<div class="cal g" style="left:922px;top:420px;padding-left:5px;"><b>6</b></div>
<div class="cal g" style="left:951px;top:420px;padding-left:5px;"><b>7</b></div>
<div class="cal g" style="left:980px;top:420px;padding-left:5px;"><b>8</b></div>
<div class="cal g" style="left:1009px;top:420px;padding-left:5px;"><b>9</b></div>
<div class="cal g" style="left:1038px;top:420px;"><b>10</b></div>
<div class="cal g" style="left:1067px;top:420px;"><b>11</b></div>
<div class="cal g" style="left:1096px;top:420px;"><b>12</b></div>
<div style="left:922px;top:449px;width:204px;height:26px;background:#f5f2dc;border:1px solid #ebe7cc;border-radius:2px"></div>
<div class="t" style="left:934px;top:450px;font-size:20px;line-height:24px;color:#5a4408;letter-spacing:-0.62px">21 февраля 2017 г.</div>
<svg style="left:1106px;top:458px" width="15" height="8" viewBox="0 0 15 8"><path d="M0 0H15L7.500 8Z" fill="#5a4408"/></svg>
<div class="lbl" style="left:900px;top:494px">Клиент:</div>
<div class="inp" style="left:941px;top:491px;width:175px;height:18px"><div class="lbl" style="left:3px;top:2px;color:#000">Групповая заявка</div><div style="left:143px;top:0;width:31px;height:16px;border-left:1px solid #d8cfa8;background:linear-gradient(#fbf9ec,#f1ecd4 55%,#e6dfbf)"><div style="left:2px;top:11px;width:2px;height:2px;background:#3a2e0c"></div><div style="left:6px;top:11px;width:2px;height:2px;background:#3a2e0c"></div><div style="left:10px;top:11px;width:2px;height:2px;background:#3a2e0c"></div><div style="left:15px;top:0;width:1px;height:16px;background:#e4dcb8"></div><svg style="left:16px;top:1px" width="12" height="12" viewBox="0 0 12 12"><circle cx="4.900" cy="4.900" r="3.300" fill="#fff" stroke="#5a4410" stroke-width="1.300"/><path d="M7.400 7.400L10.200 10.200" stroke="#5a4410" stroke-width="1.800" stroke-linecap="round"/></svg></div></div>
<div class="btn" style="left:1124px;top:490px;width:24px;height:19px"></div>
<svg style="left:1124px;top:490px" width="24" height="19" viewBox="1124 490 24 19"><rect x="1129.300" y="493.700" width="5.800" height="12.700" fill="#fff" stroke="#d4d4d8" stroke-width="0.500"/><path d="M1134.100 507.500V503Q1134.100 500.400 1136.700 500.400H1141.300Q1143.900 500.400 1143.900 503V507.500Z" fill="#dc3852"/><path d="M1137 500.400H1141Q1141 502.900 1139 502.900Q1137 502.900 1137 500.400Z" fill="#fff"/><ellipse cx="1139.300" cy="498.800" rx="2.800" ry="3" fill="#f0c48c"/><path d="M1135 497.500Q1134.600 491.800 1139 491.800Q1143.600 491.800 1143 497.500Q1142.900 499.500 1142 500Q1142 496.500 1139 496.200Q1136 496.200 1135 497.500Z" fill="#dca048"/><circle cx="1134.300" cy="499.300" r="3.100" fill="#cfe0f2" stroke="#4a64a8" stroke-width="1.300"/><path d="M1132.200 502L1129.200 506.600" stroke="#3e58a0" stroke-width="2" stroke-linecap="round"/></svg>
<svg style="left:903px;top:518px" width="16" height="18" viewBox="0 0 16 18"><path d="M5.300 12.600L4.600 15.800L8.200 13.400" fill="#fbf6ee" stroke="#8a4a2a" stroke-width="1"/><circle cx="8" cy="7.300" r="6.300" fill="#fbf6ee" stroke="#8a4a2a" stroke-width="1.200"/><circle cx="8" cy="7.300" r="5" fill="#fff" opacity="0.700"/><path d="M8 3.300V8.300" stroke="#a8502a" stroke-width="1.900"/><circle cx="8" cy="10.700" r="1.050" fill="#a8502a"/></svg>
<div class="lbl" style="left:921px;top:521px">Заявка</div>
<div style="left:963px;top:519px;width:1px;height:17px;background:#d9d0aa"></div>
<svg style="left:969px;top:517px" width="18" height="18" viewBox="0 0 18 18"><path d="M7 17.500V13.500Q7 10.300 10 10.300H14.300Q17.300 10.300 17.300 13.500V17.500Z" fill="#dc3852"/><path d="M10 10.300H14.300Q14.300 13 12.150 13Q10 13 10 10.300Z" fill="#fff"/><path d="M8 9.800Q7 1 12.200 1Q17.400 1 16.400 9.800Q12.200 11 8 9.800Z" fill="#cf9c52"/><path d="M9.300 5H15.100V7.500Q15.100 10.600 12.200 10.600Q9.300 10.600 9.300 7.500Z" fill="#f0c896"/><path d="M2 8.300H4.800V6.300L8 9.300L4.800 12.300V10.300H2Z" fill="#58a416"/></svg>
<div class="lbl" style="left:988px;top:521px">Продажа</div>
<div style="left:1039px;top:519px;width:1px;height:17px;background:#d9d0aa"></div>
<svg style="left:1047px;top:519px" width="14" height="16" viewBox="0 0 14 16"><path d="M1.500 0.500H9.500L12.500 3.500V15.500H1.500Z" fill="#fff" stroke="#6a7a9a"/><path d="M9.500 0.500V3.500H12.500" fill="#dde6f2" stroke="#6a7a9a"/><rect x="3.500" y="6" width="2" height="7" fill="#d03030"/><rect x="6" y="8" width="2" height="5" fill="#3a8a2a"/><rect x="8.500" y="5" width="2" height="8" fill="#d08a20"/><path d="M3 13.500H11.500" stroke="#555" stroke-width="0.800"/></svg>
<div class="lbl" style="left:1064px;top:521px">Перейти</div>
<svg style="left:1111px;top:526px" width="5" height="3" viewBox="0 0 5 3"><path d="M0 0H5L2.500 3Z" fill="#333"/></svg>
<div style="left:1121px;top:519px;width:1px;height:17px;background:#d9d0aa"></div>
<svg style="left:1134px;top:526px" width="5" height="3" viewBox="0 0 5 3"><path d="M0 0H5L2.500 3Z" fill="#333"/></svg>
<div style="left:900px;top:546px;width:248px;height:300px;border:1px solid #b9ae82;background:#fff"></div>
<div style="left:901px;top:547px;width:246px;height:19px;background:linear-gradient(#f8f5e2,#efe9cf 60%,#e8e1c2)"></div>
<div style="left:901px;top:566px;width:246px;height:1px;background:#cfc59f"></div>
<div class="lbl" style="left:905px;top:550px;color:#444">Сотрудники</div>
<div style="left:1131px;top:547px;width:16px;height:298px;border-left:1px solid #b9ae82;background:#fbfaf3"></div>
<div style="left:1132px;top:547px;width:15px;height:19px;background:linear-gradient(90deg,#fbf9ec,#f3eed6 60%,#ebe4c6)"></div>
<div style="left:1132px;top:567px;width:15px;height:101px;background:linear-gradient(90deg,#fcfaee,#f2ecd2 50%,#e6dfbc)"></div>
<div style="left:1131px;top:668px;width:16px;height:1px;background:#b9ae82"></div>
<div style="left:1131px;top:824px;width:16px;height:1px;background:#b9ae82"></div>
<div style="left:1132px;top:825px;width:15px;height:20px;background:linear-gradient(90deg,#fbf9ec,#f3eed6 60%,#ebe4c6)"></div>
<svg style="left:1135px;top:552px" width="9" height="9" viewBox="0 0 9 9"><path d="M4.5 0.5 L8.5 8 L0.5 8 Z" fill="#c9c6b8"/></svg>
<svg style="left:1135px;top:830px" width="9" height="9" viewBox="0 0 9 9"><path d="M0.5 1 L8.5 1 L4.5 8.5 Z" fill="#8a8a8a"/></svg>
<div style="left:1138px;top:614px;width:3px;height:4px;border:1px solid #d2cba8;border-right:none;border-radius:2px 0 0 2px"></div>
<div style="left:901px;top:567px;width:230px;height:278px;overflow:hidden">
<div style="left:23px;top:0px;width:124px;height:18px;background:#7a9bd3"></div>
<svg style="left:6px;top:5px" width="10" height="10" viewBox="0 0 9 9"><circle cx="4.500" cy="4.500" r="3.800" fill="#fff" stroke="#a0a0a0" stroke-width="0.900"/><path d="M2.500 4.500H6.500" stroke="#888" stroke-width="1"/></svg>
<div class="tr" style="left:25px;top:4px;color:#fff;">ТОО "Жайляу Фитнес"</div>
<div style="left:0;top:18px;width:230px;height:1px;background:#cdd6e4"></div>
<svg style="left:25px;top:24px" width="10" height="10" viewBox="0 0 9 9"><circle cx="4.500" cy="4.500" r="3.800" fill="#fff" stroke="#a0a0a0" stroke-width="0.900"/><path d="M2.500 4.500H6.500" stroke="#888" stroke-width="1"/></svg>
<div class="tr" style="left:44px;top:23px;"></div>
<div style="left:0;top:37px;width:230px;height:1px;background:#cdd6e4"></div>
<div class="tr" style="left:63px;top:42px;">Жолохова Виктория</div>
<div style="left:0;top:56px;width:230px;height:1px;background:#cdd6e4"></div>
<div class="tr" style="left:63px;top:61px;">Зевахина Екатерина</div>
<div style="left:0;top:75px;width:230px;height:1px;background:#cdd6e4"></div>
<div class="tr" style="left:63px;top:80px;">Исмаилов Закир</div>
<div style="left:0;top:94px;width:230px;height:1px;background:#cdd6e4"></div>
<div class="tr" style="left:63px;top:99px;">Нам Владимир</div>
<div style="left:0;top:113px;width:230px;height:1px;background:#cdd6e4"></div>
<div class="tr" style="left:63px;top:118px;">Соринова Гульнара</div>
<div style="left:0;top:132px;width:230px;height:1px;background:#cdd6e4"></div>
<div class="tr" style="left:63px;top:137px;">Усманова Вероника</div>
<div style="left:0;top:151px;width:230px;height:1px;background:#cdd6e4"></div>
<svg style="left:25px;top:157px" width="10" height="10" viewBox="0 0 9 9"><circle cx="4.500" cy="4.500" r="3.800" fill="#fff" stroke="#a0a0a0" stroke-width="0.900"/><path d="M2.500 4.500H6.500" stroke="#888" stroke-width="1"/></svg>
<div class="tr" style="left:44px;top:156px;">Администатор</div>
<div style="left:0;top:170px;width:230px;height:1px;background:#cdd6e4"></div>
<div class="tr" style="left:63px;top:175px;">Кенесарин Арман</div>
<div style="left:0;top:189px;width:230px;height:1px;background:#cdd6e4"></div>
<div class="tr" style="left:63px;top:194px;">Путренко Ника</div>
<div style="left:0;top:208px;width:230px;height:1px;background:#cdd6e4"></div>
<div class="tr" style="left:63px;top:213px;">Толлстокулакова Динара</div>
<div style="left:0;top:227px;width:230px;height:1px;background:#cdd6e4"></div>
<div class="tr" style="left:63px;top:232px;">Тохтахунов Султан</div>
<div style="left:0;top:246px;width:230px;height:1px;background:#cdd6e4"></div>
<svg style="left:25px;top:252px" width="10" height="10" viewBox="0 0 9 9"><circle cx="4.500" cy="4.500" r="3.800" fill="#fff" stroke="#a0a0a0" stroke-width="0.900"/><path d="M2.500 4.500H6.500" stroke="#888" stroke-width="1"/></svg>
<div class="tr" style="left:44px;top:251px;">Воспитатель детской комнаты</div>
<div style="left:0;top:265px;width:230px;height:1px;background:#cdd6e4"></div>
<div class="tr" style="left:63px;top:270px;">Думанова Надежда</div>
<div style="left:0;top:284px;width:230px;height:1px;background:#cdd6e4"></div>
</div>
<div style="left:5px;top:874px;width:94px;height:22px;border:1px solid #7d7f84;border-radius:4px;background:linear-gradient(#ffffff,#f4f4f5 45%,#dcdde0)"></div>
<div style="left:7px;top:876px;width:90px;height:18px;border:1px dotted #555;border-radius:2px"></div>
<div class="t" style="left:26px;top:878px;font-size:12px;line-height:14px;color:#000;letter-spacing:-0.45px">История...</div>
</div>
</body></html>
